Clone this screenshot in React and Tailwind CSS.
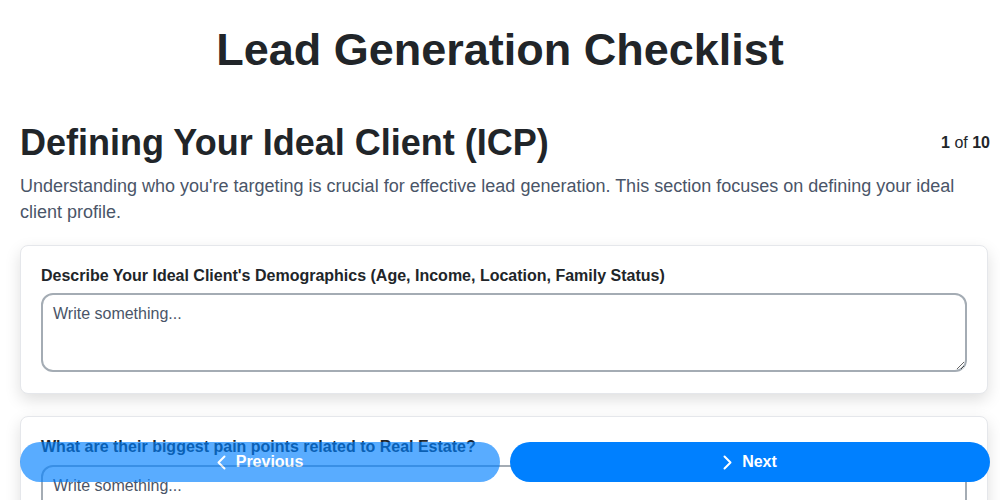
import React, { useState } from "react";

const questions = [
  "Describe Your Ideal Client's Demographics (Age, Income, Location, Family Status)",
  "What are their biggest pain points related to Real Estate?",
  "Where do they spend their time online and offline?",
];

//Small chevron drawn tight to its box
const Chevron = ({ dir }) => (
  <svg width="9" height="15" viewBox="0 0 9 15" fill="none" stroke="currentColor" strokeWidth="2" strokeLinecap="round" strokeLinejoin="round">
    {dir === "left" ? <polyline points="7.5,1.5 1.5,7.5 7.5,13.5" /> : <polyline points="1.5,1.5 7.5,7.5 1.5,13.5" />}
  </svg>
);

const QuestionCard = ({ label, value, onChange }) => {
  return (
    <div className="rounded-lg border border-gray-200 bg-white px-5 pt-5 pb-[21px] shadow-[0_6px_16px_rgba(0,0,0,0.13)]">
      <label className="mb-2 block text-base font-bold leading-[1.2] text-[#212529]">
        {label}
      </label>
      <textarea
        className="block h-[79px] w-full rounded-xl border-2 border-[#a4acb4] px-2.5 py-[7px] text-base text-[#212529] outline-none placeholder:text-[#4a5568]"
        placeholder="Write something..."
        value={value}
        onChange={(e) => onChange(e.target.value)}
      />
    </div>
  );
};

export default function App() {
  const [answers, setAnswers] = useState({});
  const [step] = useState(1);

  return (
    <div className="min-h-screen bg-white pb-24 font-['Liberation_Sans',Arial,sans-serif]">
      {/* PAGE TITLE */}
      <h1 className="pt-[23px] text-center text-[45px] font-bold leading-[1.2] text-[#212529]">
        Lead Generation Checklist
      </h1>

      <div className="pl-5 pr-2.5 pt-[44px]">
        {/* SECTION HEADER */}
        <div className="flex items-center justify-between">
          <h2 className="text-[36px] font-bold leading-[1.2] text-[#212529]">
            Defining Your Ideal Client (ICP)
          </h2>
          <span className="text-base text-[#212529]">
            <b>{step}</b> of <b>10</b>
          </span>
        </div>
        <p className="mt-[9px] pr-2.5 text-lg leading-[26px] text-[#4a5568]">
          Understanding who you're targeting is crucial for effective lead
          generation. This section focuses on defining your ideal client
          profile.
        </p>

        {/* QUESTIONS */}
        <div className="mt-5 flex flex-col gap-[22px] pr-[2px]">
          {questions.map((q, i) => (
            <QuestionCard
              key={i}
              label={q}
              value={answers[i] || ""}
              onChange={(v) => setAnswers({ ...answers, [i]: v })}
            />
          ))}
        </div>
      </div>

      {/* NAV BUTTONS */}
      <div className="fixed bottom-[18px] left-5 right-[10px] flex gap-2.5">
        <button className="flex h-10 flex-1 items-center justify-center gap-2.5 rounded-full bg-[#0080ff] text-base font-bold text-white opacity-[0.65]">
          <Chevron dir="left" />
          Previous
        </button>
        <button className="flex h-10 flex-1 items-center justify-center gap-2.5 rounded-full bg-[#0080ff] text-base font-bold text-white">
          <Chevron dir="right" />
          Next
        </button>
      </div>
    </div>
  );
}
